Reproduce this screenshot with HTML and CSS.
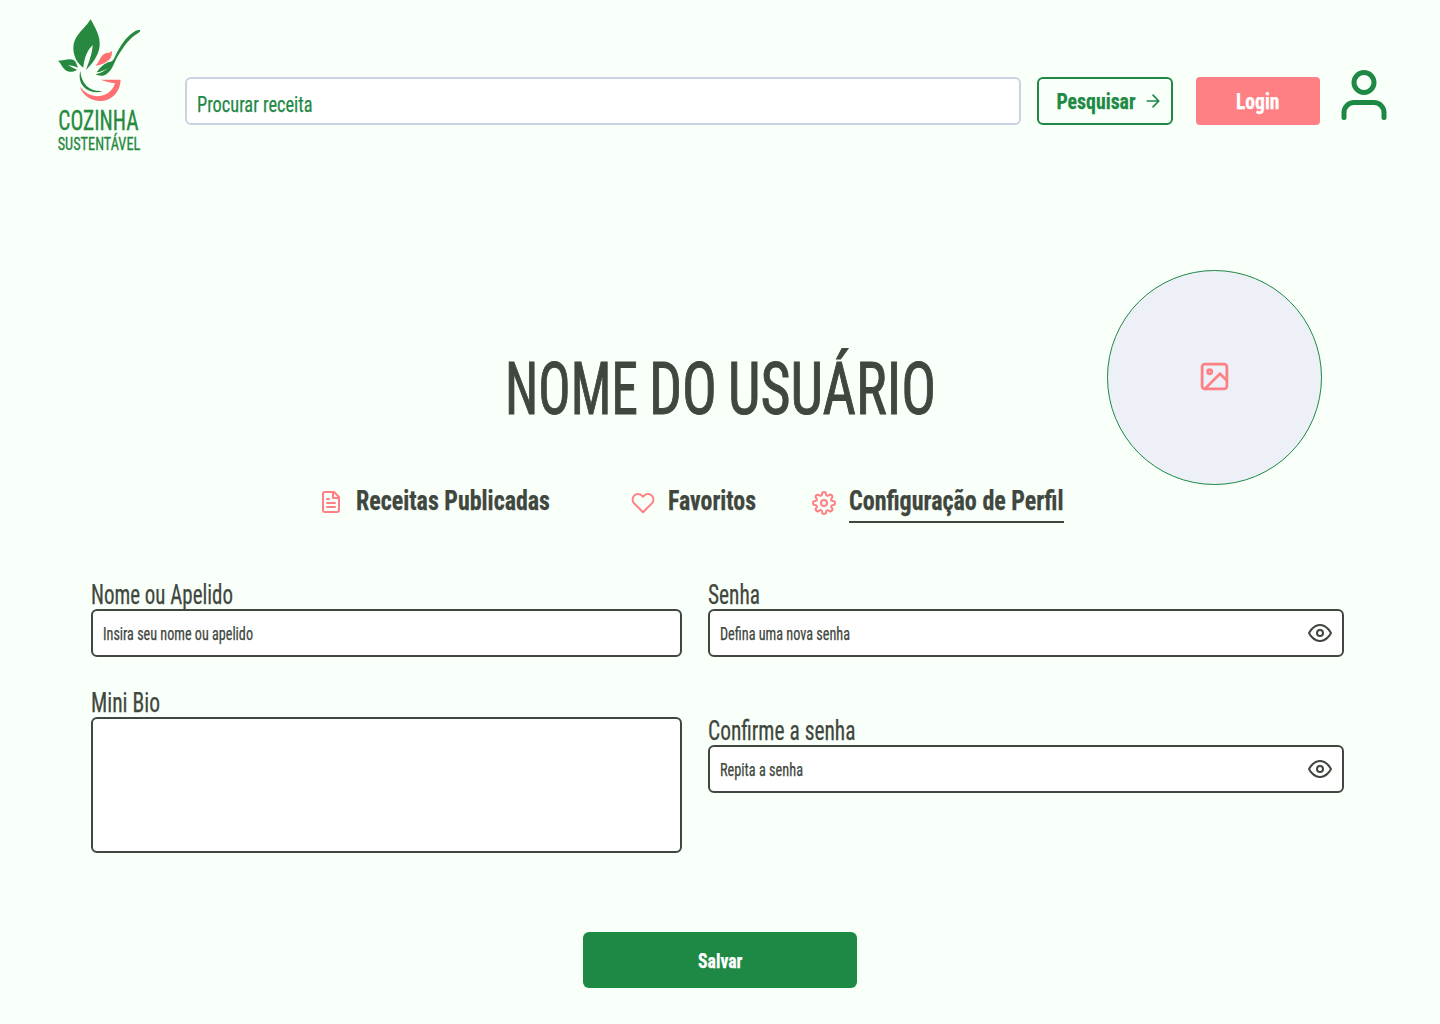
FILE: index.html
```html
<!DOCTYPE html>
<html lang="pt-BR">
<head>
<meta charset="utf-8">
<title>Cozinha Sustentável</title>
<link rel="stylesheet" href="styles.css">
</head>
<body>
<header class="header">
  <a class="logo" aria-label="Cozinha Sustentável">
    <svg class="logo-mark" width="100" height="150" viewBox="0 0 300 450">
      <g fill="#27893f">
        <path d="M122 28C110 48 94 60 82 77C68 96 68 118 74 138C78 152 88 165 100 173C102 147 111 121 128 105C127 128 118 156 107 180C126 163 146 137 149 107C151 76 135 53 122 28Z"/>
        <path d="M24 152C41 151 60 144 71 150C79 155 80 165 84 173C75 169 64 167 54 166C64 171 73 176 81 179C70 187 55 187 45 179C36 172 34 160 24 152Z"/>
        <path d="M267 60C273 60 271 65 266 68C240 82 221 109 203 139C190 162 188 180 170 192C158 200 145 198 137 193C150 190 164 183 175 174C161 182 150 186 140 187C150 174 160 162 174 157C181 155 187 155 192 146C205 119 220 91 242 73C252 64 261 60 267 60Z"/>
        <path d="M91 183C94 222 119 246 158 243C121 257 79 228 91 183Z"/>
      </g>
      <g fill="#ff7072">
        <path d="M185 122C190 143 172 162 136 167C149 157 149 138 164 131C173 126 181 130 185 122Z"/>
        <path d="M152 209H212C211 241 190 271 153 273C122 273 96 254 90 230C105 250 128 261 151 258C175 254 190 238 195 220C181 217 166 215 152 209Z"/>
      </g>
      <g class="logo-text">
        <text x="25" y="360" font-size="81" textLength="241" lengthAdjust="spacingAndGlyphs">COZINHA</text>
        <text x="23" y="419" font-size="55" textLength="248" lengthAdjust="spacingAndGlyphs">SUSTENTÁVEL</text>
      </g>
    </svg>
  </a>
  <div class="search"><svg class="t green" width="116" height="30"><text x="0" y="22" font-size="22.5" textLength="115.5" lengthAdjust="spacingAndGlyphs">Procurar receita</text></svg></div>
  <button class="btn btn-search">
    <svg class="t bold green" width="80" height="30"><text x="0.5" y="22" font-size="22.5" textLength="79" lengthAdjust="spacingAndGlyphs">Pesquisar</text></svg>
    <svg class="line" width="20" height="20" viewBox="0 0 24 24" stroke-width="2"><path d="M5 12h14M12 5l7 7-7 7"/></svg>
  </button>
  <button class="btn btn-login"><svg class="t bold" width="45" height="30"><text x="0" y="22" font-size="22.5" textLength="43.5" lengthAdjust="spacingAndGlyphs">Login</text></svg></button>
  <svg class="user line" width="60" height="60" viewBox="0 0 24 24" stroke-width="2"><path d="M20 21v-2a4 4 0 0 0-4-4H8a4 4 0 0 0-4 4v2"/><circle cx="12" cy="7" r="4"/></svg>
</header>
<main class="main">
  <section class="profile">
    <h1>
      <svg class="t" width="133" height="80"><text y="63.5" font-size="72" textLength="133" lengthAdjust="spacingAndGlyphs">NOME</text></svg>
      <svg class="t" width="68" height="80"><text y="63.5" font-size="72" textLength="68" lengthAdjust="spacingAndGlyphs">DO</text></svg>
      <svg class="t" width="208" height="80"><text y="63.5" font-size="72" textLength="208" lengthAdjust="spacingAndGlyphs">USUÁRIO</text></svg>
    </h1>
    <div class="avatar"><svg class="line" width="33" height="33" viewBox="0 0 24 24" stroke-width="2"><rect x="3" y="3" width="18" height="18" rx="2"/><circle cx="8.5" cy="8.5" r="1.5"/><path d="M21 15l-5-5L5 21"/></svg></div>
  </section>
  <nav class="tabs">
    <a class="tab tab-recipes"><svg class="line" width="24" height="24" viewBox="0 0 24 24" stroke-width="2"><path d="M15 2H6a2 2 0 0 0-2 2v16a2 2 0 0 0 2 2h12a2 2 0 0 0 2-2V7l-5-5zM14 2v6h6M16 13H8M16 17H8M10 9H8"/></svg><svg class="t bold" width="194" height="36"><text x="0" y="26" font-size="27.2" textLength="194" lengthAdjust="spacingAndGlyphs">Receitas Publicadas</text></svg></a>
    <a class="tab tab-favorites"><svg class="line" width="24" height="24" viewBox="0 0 24 24" stroke-width="2"><path d="M20.84 4.61a5.5 5.5 0 0 0-7.78 0L12 5.67l-1.06-1.06a5.5 5.5 0 0 0-7.78 7.78l1.06 1.06L12 21.23l7.78-7.78 1.06-1.06a5.5 5.5 0 0 0 0-7.78z"/></svg><svg class="t bold" width="88" height="36"><text x="0" y="26" font-size="27.2" textLength="88" lengthAdjust="spacingAndGlyphs">Favoritos</text></svg></a>
    <a class="tab tab-settings"><svg class="line" width="24" height="24" viewBox="0 0 24 24" stroke-width="2"><circle cx="12" cy="12" r="3"/><path d="M19.4 15a1.65 1.65 0 0 0 .33 1.82l.06.06a2 2 0 0 1-2.83 2.83l-.06-.06a1.65 1.65 0 0 0-2.8 1.17V21a2 2 0 0 1-4 0v-.09a1.65 1.65 0 0 0-2.9-1.26l-.06.06a2 2 0 0 1-2.83-2.83l.06-.06A1.65 1.65 0 0 0 3.09 14H3a2 2 0 0 1 0-4h.09a1.65 1.65 0 0 0 1.26-2.82l-.06-.06a2 2 0 0 1 2.83-2.83l.06.06A1.65 1.65 0 0 0 10 3.09V3a2 2 0 0 1 4 0v.09a1.65 1.65 0 0 0 2.82 1.26l.06-.06a2 2 0 0 1 2.83 2.83l-.06.06A1.65 1.65 0 0 0 20.91 10H21a2 2 0 0 1 0 4h-.09a1.65 1.65 0 0 0-1.51 1z"/></svg><span class="current"><svg class="t bold" width="215" height="36"><text x="0" y="25.5" font-size="27.2" textLength="214.5" lengthAdjust="spacingAndGlyphs">Configuração de Perfil</text></svg></span></a>
  </nav>
  <form class="form">
    <div class="column">
      <div class="field">
        <label><svg class="t" width="142" height="30"><text x="0" y="24" font-size="27" textLength="142" lengthAdjust="spacingAndGlyphs">Nome ou Apelido</text></svg></label>
        <div class="input"><svg class="t" width="150" height="24"><text x="0" y="18.5" font-size="18.2" textLength="150" lengthAdjust="spacingAndGlyphs">Insira seu nome ou apelido</text></svg></div>
      </div>
      <div class="field">
        <label><svg class="t" width="70" height="30"><text x="0" y="24" font-size="27" textLength="69" lengthAdjust="spacingAndGlyphs">Mini Bio</text></svg></label>
        <div class="input bio"></div>
      </div>
    </div>
    <div class="column column-password">
      <div class="field">
        <label><svg class="t" width="52" height="30"><text x="0" y="24" font-size="27" textLength="52" lengthAdjust="spacingAndGlyphs">Senha</text></svg></label>
        <div class="input"><svg class="t" width="130" height="24"><text x="0" y="18.5" font-size="18.2" textLength="130" lengthAdjust="spacingAndGlyphs">Defina uma nova senha</text></svg>
          <svg class="line" width="24" height="24" viewBox="0 0 24 24" stroke-width="2"><path d="M1 12s4-8 11-8 11 8 11 8-4 8-11 8-11-8-11-8z"/><circle cx="12" cy="12" r="3"/></svg></div>
      </div>
      <div class="field">
        <label><svg class="t" width="147" height="30"><text x="0" y="24" font-size="27" textLength="147.5" lengthAdjust="spacingAndGlyphs">Confirme a senha</text></svg></label>
        <div class="input"><svg class="t" width="84" height="24"><text x="0" y="18.5" font-size="18.2" textLength="83" lengthAdjust="spacingAndGlyphs">Repita a senha</text></svg>
          <svg class="line" width="24" height="24" viewBox="0 0 24 24" stroke-width="2"><path d="M1 12s4-8 11-8 11 8 11 8-4 8-11 8-11-8-11-8z"/><circle cx="12" cy="12" r="3"/></svg></div>
      </div>
    </div>
  </form>
  <button class="btn btn-save"><svg class="t bold" width="45" height="30"><text x="0" y="23" font-size="20.2" textLength="44.5" lengthAdjust="spacingAndGlyphs">Salvar</text></svg></button>
</main>
</body>
</html>
```
FILE: styles.css
```css
* { box-sizing: border-box; }
body {
  margin: 0;
  min-height: 1024px;
  background: #f9fff9;
  color: #40473e;
  font-family: Roboto, "Liberation Sans", sans-serif;
  font-stretch: 75%;
}
svg { display: block; flex: none; }
.t { overflow: visible; fill: currentColor; stroke: currentColor; stroke-width: 0.25px; font-weight: 400; }
.bold { font-weight: 700; }
h1 .t { stroke-width: 1px; }
.green { color: #1e8945; }
.line { fill: none; stroke: currentColor; stroke-linecap: round; stroke-linejoin: round; }
.header { display: flex; align-items: flex-start; height: 270px; padding: 10px 0 0 50px; }
.logo-mark { overflow: visible; }
.logo-text { fill: #27893f; stroke: #27893f; stroke-width: 1px; font-weight: 400; }
.search {
  width: 836px; height: 48px; margin: 67px 0 0 35px; padding: 11px 10px;
  background: #fff; border: 2px solid #cbd2e2; border-radius: 6px;
}
.btn {
  display: flex; justify-content: center; height: 48px; padding: 0;
  border: 0; border-radius: 4px; color: #fff; font: inherit;
}
.btn-search {
  width: 136px; margin: 67px 0 0 16px; padding: 8px 0 0 8px; gap: 7px;
  border: 2px solid #1e8945; border-radius: 6px; background: transparent; color: #1e8945;
}
.btn-search .line { margin-top: 4px; }
.btn-login { width: 124px; margin: 67px 0 0 23px; padding-top: 10px; background: #ff8084; }
.user { margin: 55px 0 0 13.5px; color: #1e8945; }
.profile { display: flex; height: 215px; padding-left: 505px; }
h1 { display: flex; gap: 11px; width: 602px; margin: 80px 0 0; }
.avatar {
  display: flex; align-items: center; justify-content: center; width: 215px; height: 215px; padding-bottom: 2px;
  border: 1px solid #1e8945; border-radius: 50%; background: #edf0f7; color: #ff8084;
}
.tabs { display: flex; height: 95px; padding-left: 319px; }
.tab { display: flex; }
.tab > .line { margin: 5px 13px 0 0; color: #ff8084; }
.tab > .t, .current { margin-top: -1px; }
.tab-favorites { margin-left: 81px; }
.tab-favorites > .line { margin-top: 6px; }
.tab-settings { margin-left: 56px; }
.tab-settings > .line { margin-top: 6px; }
.current { height: 39px; border-bottom: 2px solid #40473e; }
.form { display: grid; grid-template-columns: 591px 636px; column-gap: 26px; margin-left: 91px; }
.column { display: flex; flex-direction: column; gap: 31px; }
.column-password { gap: 59px; }
label { display: block; height: 29px; }
.input {
  display: flex; justify-content: space-between; align-items: center; height: 48px; padding: 0 10px;
  background: #fff; border: 2px solid #40473e; border-radius: 6px;
}
.bio { height: 136px; }
.btn-save { width: 274px; height: 56px; margin: 79px auto 0; padding-top: 13px; border-radius: 6px; background: #1e8945; }
```
